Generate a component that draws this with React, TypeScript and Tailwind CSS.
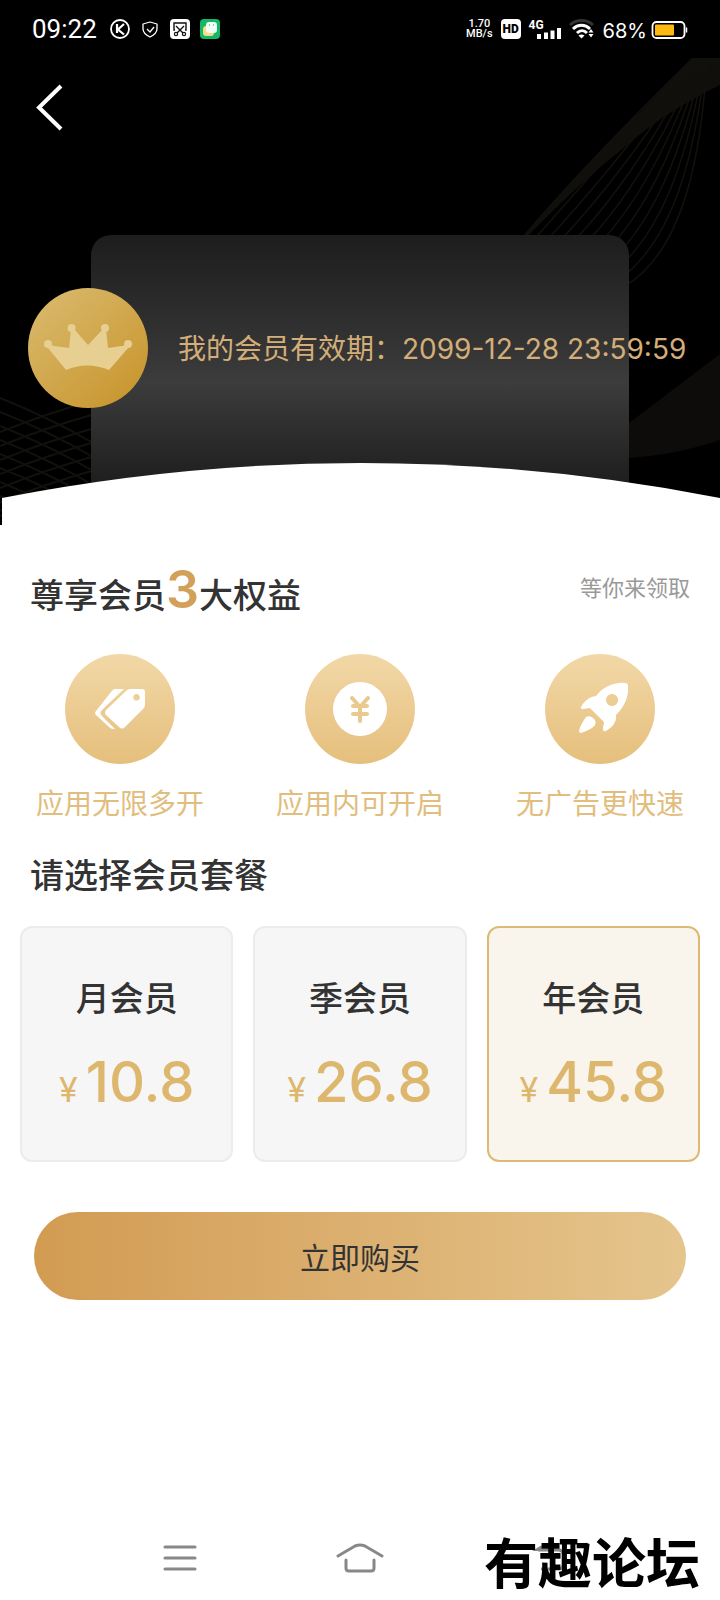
import React, { useState } from "react";

interface Plan {
  id: string;
  name: string;
  price: string;
}

const plans: Plan[] = [
  { id: "month", name: "月会员", price: "10.8" },
  { id: "quarter", name: "季会员", price: "26.8" },
  { id: "year", name: "年会员", price: "45.8" }
];

const benefits = [
  { label: "应用无限多开", icon: TagsIcon },
  { label: "应用内可开启", icon: YuanIcon },
  { label: "无广告更快速", icon: RocketIcon }
];

function TagsIcon() {
  return (
    <svg viewBox="0 0 110 110" className="size-full" aria-hidden="true">
      <path
        d="M50 35h9L37 56q-3 3 0 6l13 13h-2q-2 0-4-2L31 61q-2-2 0-4l15-19q2-3 4-3z"
        fill="#fff"
      />
      <path
        fillRule="evenodd"
        d="M65 35h12q3 0 3 3v13q0 2-2 4L60 73q-3 3-6 0L41 61q-2-2 0-5l20-19q2-2 4-2zM71.500 40a3.300 3.300 0 1 0 .1 0z"
        fill="#fff"
      />
    </svg>
  );
}

function YuanIcon() {
  return (
    <svg viewBox="0 0 110 110" className="size-full" aria-hidden="true">
      <circle cx="55" cy="55" r="27" fill="#fff" />
      <path
        d="M47 44l8 9 8-9M48 52h14M48 60h14M55 53v14"
        fill="none"
        stroke="#e9c98e"
        strokeWidth="4"
        strokeLinecap="round"
        strokeLinejoin="round"
      />
    </svg>
  );
}

function RocketIcon() {
  return (
    <svg viewBox="0 0 110 110" className="size-full" aria-hidden="true">
      <path
        fillRule="evenodd"
        d="M51 42C58 33 69 28 80 29q3 0 3 3c1 11-4 21-12 29 1 8-5 13-10 16-3 1-3-1-3-3l1-6-14-14-7 1q-3 0-2-2c3-6 8-10 15-11zM67 40a6 6 0 1 0 .1 0z"
        fill="#fff"
      />
      <path d="M41 63c4-3 12 3 9 8-3 4-9 6-14 8q-2 0-2-2c1-5 4-10 7-14z" fill="#fff" />
    </svg>
  );
}

function StatusBar() {
  return (
    <div className="h-[58px] flex items-center px-8 text-white">
      <span className="font-[Roboto] text-[26px] leading-8">09:22</span>
      <svg width="112" height="24" viewBox="0 0 112 24" className="ml-3" aria-hidden="true">
        <circle cx="11" cy="12" r="9" fill="none" stroke="#fff" strokeWidth="1.800" />
        <path d="M8 7v9M15 7l-6 5.500 6 5" fill="none" stroke="#fff" strokeWidth="2.200" />
        <path d="M41 5l7 2v5c0 3-3 6-7 8-4-2-7-5-7-8V7z" fill="none" stroke="#fff" strokeWidth="1.300" strokeLinejoin="round" />
        <path d="M38 12l3 3 4-5" fill="none" stroke="#fff" strokeWidth="1.300" />
        <rect x="61" y="2" width="20" height="20" rx="4" fill="#fff" />
        <path d="M66 13h-1V6h12v7h-1M67 9l7 7M75 9l-7 7" fill="none" stroke="#111" strokeWidth="1.400" />
        <circle cx="67" cy="17" r="1.600" fill="none" stroke="#111" strokeWidth="1.200" />
        <circle cx="75" cy="17" r="1.600" fill="none" stroke="#111" strokeWidth="1.200" />
        <rect x="91" y="2" width="20" height="20" rx="4" fill="#12b76a" />
        <rect x="94" y="9" width="11" height="10" rx="3" fill="#f5dd86" />
        <rect x="97" y="5" width="11" height="11" rx="3" fill="#f2fff9" />
        <path d="M100 8h1M104 8h1" stroke="#3c8c68" strokeWidth="1.200" />
      </svg>
      <div className="ml-auto flex items-center">
        <div className="text-center font-[Roboto] text-[11px] leading-[10px] font-medium">
          <div>1.70</div>
          <div>MB/s</div>
        </div>
        <div className="ml-2 flex size-5 items-center justify-center rounded bg-white font-[Roboto] text-xs font-black text-black">
          HD
        </div>
        <div className="relative ml-2 h-5 w-8 font-[Roboto] text-xs leading-none font-bold">
          <span>4G</span>
          <svg width="24" height="11" viewBox="0 0 24 11" className="absolute right-0 bottom-0" aria-hidden="true">
            <path d="M2 11V6M9 11V4.500M15.500 11V2.500M22 11V0" stroke="#fff" strokeWidth="4" />
          </svg>
        </div>
        <svg width="26" height="22" viewBox="0 0 26 22" className="ml-2" aria-hidden="true">
          <path d="M1 7C7 1 18 1 24 7" fill="none" stroke="#333" strokeWidth="3" />
          <path d="M4 11c5-5 12-5 17 0M8 15c3-3 7-3 10 0" fill="none" stroke="#fff" strokeWidth="3" />
          <path d="M9.500 17.500q3-2 6 0l-3 3z" fill="#fff" />
          <path d="M22 11l2.500 3.500h-5zM22 19.500l2.500-3.500h-5z" fill="#fff" />
        </svg>
        <span className="ml-2 pt-1 font-[Inter] text-xl leading-6">68%</span>
        <svg width="37" height="20" viewBox="0 0 37 20" className="ml-1" aria-hidden="true">
          <rect x="1.500" y="3" width="32" height="16" rx="4" fill="none" stroke="#fff" strokeWidth="1.800" />
          <rect x="4" y="5.500" width="19" height="11" rx="1" fill="#fdb913" />
          <path d="M35.500 8.500v5" stroke="#fff" strokeWidth="1.500" />
        </svg>
      </div>
    </div>
  );
}

function Waves() {
  const fan = Array.from({ length: 12 }, (_, i) => i / 11);
  const mesh = Array.from({ length: 9 }, (_, i) => i * 14);
  return (
    <svg
      viewBox="0 0 720 467"
      preserveAspectRatio="none"
      className="absolute inset-0 size-full"
      fill="none"
      aria-hidden="true"
    >
      <path d="M693 0H720V27C690 42 655 62 625 89Q580 124 527 179H523Q600 92 640 54z" fill="#100f0b" />
      {fan.map((t) => (
        <path
          key={t}
          d={`M${693 + 14 * t} 0C${640 + 62 * t} ${52 + 40 * t} ${580 + 105 * t} ${112 + 80 * t} ${523 + 102 * t} ${179 + 49 * t}`}
          stroke="#12110d"
          strokeWidth="1.500"
        />
      ))}
      <path d="M629 365L720 296V382Q680 396 629 400z" fill="#0d0c0a" />
      <g stroke="#12110d" strokeWidth="2">
        {mesh.map((y) => (
          <path key={y} d={`M0 ${340 + y}Q50 ${360 + y} 95 ${386 + y}`} />
        ))}
        {mesh.map((y) => (
          <path key={y} d={`M0 ${374 + y}Q45 ${356 + y} 95 ${342 + y}`} />
        ))}
      </g>
    </svg>
  );
}

function MemberHeader() {
  return (
    <header className="bg-black">
      <StatusBar />
      <div className="relative h-[467px]">
        <Waves />
        <div className="absolute top-[177px] right-[91px] bottom-0 left-[91px] rounded-t-[20px] bg-linear-to-b from-[#1d1d1d] from-0% via-[#3c3c3c] via-51% to-[#131313]" />
        <div className="relative flex h-[230px] items-start pt-6 pl-8">
          <button type="button" aria-label="返回" className="cursor-pointer">
            <svg width="32" height="52" viewBox="0 0 32 52" aria-hidden="true">
              <path d="M29 4L7 25.500 29 47" fill="none" stroke="#fff" strokeWidth="4" />
            </svg>
          </button>
        </div>
        <div className="relative flex items-center gap-[30px] pl-7 text-[#d3ae78]">
          <svg width="120" height="120" viewBox="0 0 120 120" className="shrink-0" aria-hidden="true">
            <defs>
              <linearGradient id="medal" x1="0.150" y1="0.100" x2="0.850" y2="0.900">
                <stop offset="0" stopColor="#d8b768" />
                <stop offset="1" stopColor="#c99731" />
              </linearGradient>
            </defs>
            <circle cx="60" cy="60" r="60" fill="url(#medal)" />
            <g fill="#e7cf92">
              <path d="M20 57l21 3 2-19h3l14 16 15-16h3l2 19 20-3 1 2-20 23q-22-9-43 0L20 60z" />
              <circle cx="20" cy="56" r="4" />
              <circle cx="43.500" cy="40" r="4" />
              <circle cx="77" cy="40" r="4" />
              <circle cx="100" cy="56" r="4" />
            </g>
          </svg>
          <p className="flex items-baseline text-[28px] leading-10 whitespace-nowrap">
            我的会员有效期：
            <span className="font-[Inter]">2099-12-28 23:59:59</span>
          </p>
        </div>
        <svg
          viewBox="0 0 720 62"
          preserveAspectRatio="none"
          className="absolute bottom-0 left-0 h-[62px] w-full"
          aria-hidden="true"
        >
          <path d="M2 35Q361 -35 720 35V62H2z" fill="#fff" />
        </svg>
      </div>
    </header>
  );
}

function BottomNav() {
  return (
    <nav className="relative grid h-[84px] grid-cols-3 px-[90px] text-[#888]">
      <button type="button" aria-label="最近任务" className="flex items-center justify-center">
        <svg width="36" height="32" viewBox="0 0 36 32" aria-hidden="true">
          <path d="M3 5h30M3 16h30M3 27h30" stroke="currentColor" strokeWidth="3" strokeLinecap="round" />
        </svg>
      </button>
      <button type="button" aria-label="主屏幕" className="flex items-center justify-center">
        <svg width="48" height="32" viewBox="0 0 48 32" fill="none" aria-hidden="true">
          <path
            d="M2 14L19 4q5-2 10 0l17 10M10 18v8q0 3 3 3h22q3 0 3-3v-8"
            stroke="currentColor"
            strokeWidth="3"
            strokeLinecap="round"
          />
        </svg>
      </button>
      <button type="button" aria-label="返回上一级" className="flex items-center justify-center pl-4">
        <svg width="36" height="32" viewBox="0 0 36 32" fill="none" aria-hidden="true">
          <path d="M2 9l10-6v6z" fill="currentColor" />
          <path d="M8 8h20q5 0 5 4v11q0 4-5 4H11" stroke="currentColor" strokeWidth="3" />
        </svg>
      </button>
      <span className="absolute right-5 bottom-0 text-[54px] leading-[78px] font-bold text-black">
        有趣论坛
      </span>
    </nav>
  );
}

export default function App() {
  const [selected, setSelected] = useState("year");

  return (
    <div className="flex min-h-screen flex-col bg-white font-['Noto_Sans_CJK_SC',sans-serif] text-[#333]">
      <MemberHeader />

      <main className="flex-1">
        {/* Benefits */}
        <section>
          <div className="flex items-start justify-between px-[30px] pt-[35px]">
            <h1 className="text-[34px] leading-[60px] font-medium">
              尊享会员
              <span className="font-[Inter] text-[52px] font-semibold text-[#d3a05a]">3</span>
              大权益
            </h1>
            <p className="pt-2 text-[22px] leading-9 text-[#999]">等你来领取</p>
          </div>
          <ul className="mt-[30px] grid grid-cols-3">
            {benefits.map(({ label, icon: Icon }) => (
              <li key={label} className="flex flex-col items-center gap-[18px]">
                <div className="size-[110px] rounded-full bg-linear-to-b from-[#f2d8a7] to-[#e5bf7c]">
                  <Icon />
                </div>
                <span className="text-[28px] leading-10 text-[#e1bd7e]">{label}</span>
              </li>
            ))}
          </ul>
        </section>

        {/* Plans */}
        <section>
          <h2 className="mt-[22px] px-[30px] text-[34px] leading-[60px] font-medium">请选择会员套餐</h2>
          <div className="mt-[22px] grid grid-cols-3 gap-5 px-5">
            {plans.map((plan) => (
              <label
                key={plan.id}
                className={`relative flex h-[236px] cursor-pointer flex-col items-center rounded-xl border-2 pt-11 ${
                  selected === plan.id ? "border-[#dcba74] bg-[#f9f4ec]" : "border-[#ececec] bg-[#f6f6f6]"
                }`}
              >
                <input
                  type="radio"
                  name="plan"
                  value={plan.id}
                  checked={selected === plan.id}
                  onChange={() => setSelected(plan.id)}
                  className="sr-only"
                />
                <span className="text-[34px] leading-[50px] font-medium">{plan.name}</span>
                <span className="mt-[26px] flex items-baseline gap-2 font-[Inter] text-[#deb76e]">
                  <span className="text-[34px]">¥</span>
                  <span className="text-[56px] leading-[68px] font-medium">{plan.price}</span>
                </span>
              </label>
            ))}
          </div>
        </section>

        <div className="px-[34px] pt-[50px]">
          <button
            type="button"
            className="h-[88px] w-full cursor-pointer rounded-full bg-linear-to-r from-[#d29b52] to-[#e5c58d] text-[30px]"
          >
            立即购买
          </button>
        </div>
      </main>

      <BottomNav />
    </div>
  );
}
